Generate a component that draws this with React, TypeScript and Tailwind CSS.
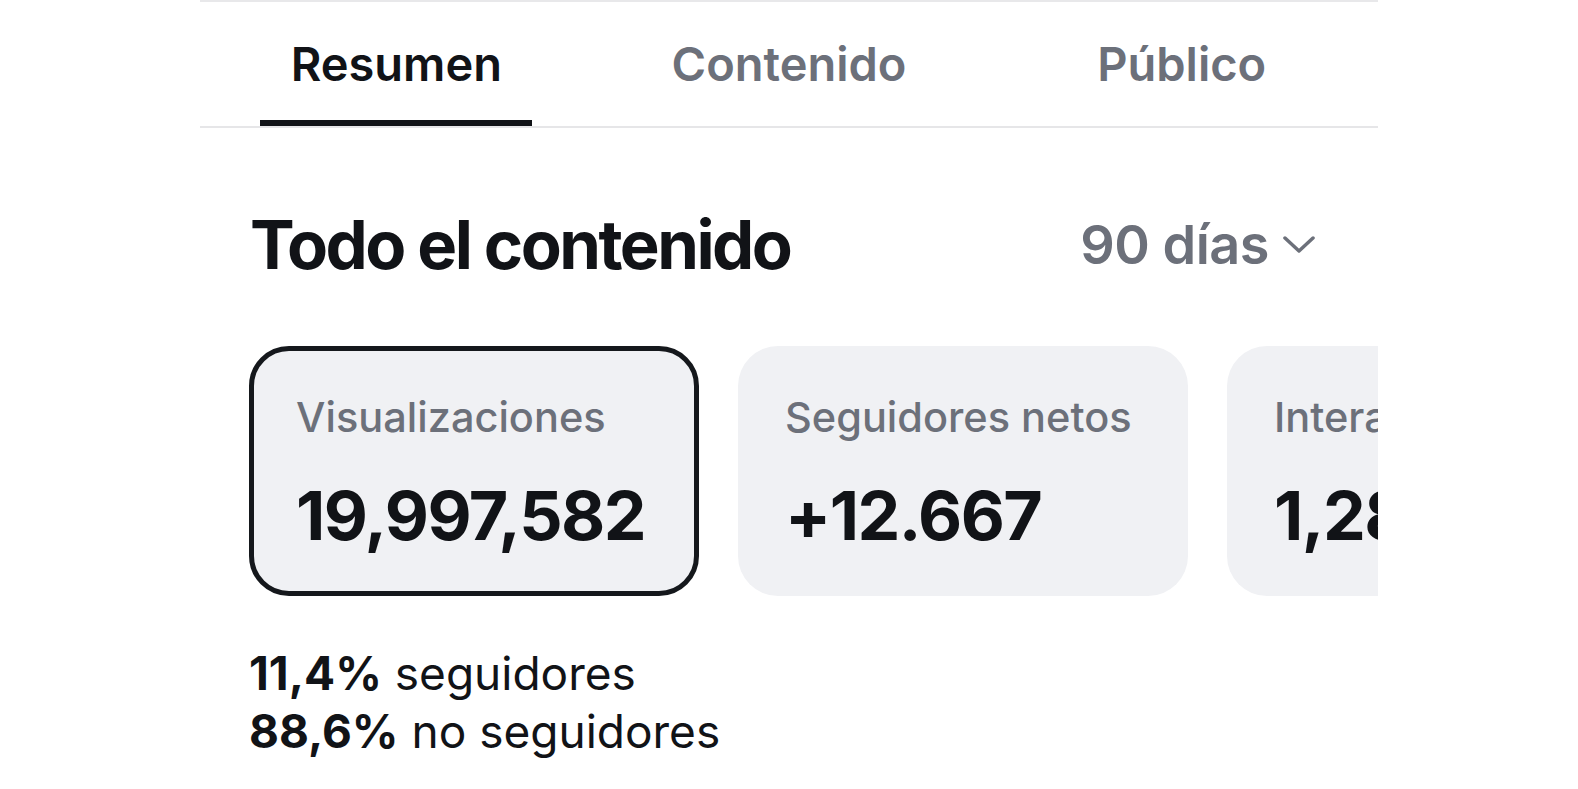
const tabs = [
  { label: 'Resumen', active: true },
  { label: 'Contenido', active: false },
  { label: 'Público', active: false },
];

const cards = [
  { label: 'Visualizaciones', value: '19,997,582', selected: true },
  { label: 'Seguidores netos', value: '+12.667', selected: false },
  { label: 'Interacciones', value: '1,280,431', selected: false },
];

const App = () => {
  return (
    <div className="min-h-screen bg-white font-['Inter','Noto_Sans',sans-serif] text-[#111317]">
      <div className="mx-auto w-[1178px] overflow-hidden border-t-2 border-[#e8e8ea]">
        <nav className="flex h-[126px] border-b-2 border-[#e6e6e8]">
          {tabs.map((tab) => (
            <div key={tab.label} className="flex flex-1 flex-col items-center">
              <span
                className={`mt-[34px] text-[47px] font-semibold leading-[56px] ${
                  tab.active ? 'text-[#111317]' : 'text-[#6c707a]'
                }`}
              >
                {tab.label}
              </span>
              {tab.active && <div className="mt-auto h-[6px] w-[272px] bg-[#111317]" />}
            </div>
          ))}
        </nav>

        <div className="flex items-center justify-between pl-[50px] pr-[63px] pt-[79px]">
          <h1 className="text-[67px] font-bold leading-[76px] tracking-[-2.5px]">Todo el contenido</h1>
          <button type="button" className="flex items-center gap-[14px] text-[#6c707a]">
            <span className="text-[54px] font-semibold leading-[76px] tracking-[-0.5px]">90 días</span>
            <svg width="32" height="18" viewBox="0 0 32 18" fill="none">
              <path d="M2 2 L16 15 L30 2" stroke="#6c707a" strokeWidth="3.5" strokeLinecap="round" strokeLinejoin="round" />
            </svg>
          </button>
        </div>

        <div className="mt-[63px] flex gap-[39px] pl-[49px]">
          {cards.map((card) => (
            <div
              key={card.label}
              className={`flex h-[250px] w-[450px] shrink-0 flex-col rounded-[40px] bg-[#f0f1f4] ${
                card.selected ? 'border-[5px] border-[#15181c] pl-[42px] pt-[41px]' : 'pl-[47px] pt-[46px]'
              }`}
            >
              <span className="text-[41.5px] font-medium leading-[50px] text-[#6c707a]">{card.label}</span>
              <span className="mt-[33px] text-[68px] font-bold leading-[80px] tracking-[-1.5px]">{card.value}</span>
            </div>
          ))}
        </div>

        <div className="mt-[48px] pl-[49px] text-[46px] leading-[58px]">
          <p>
            <span className="font-bold">11,4%</span> seguidores
          </p>
          <p>
            <span className="font-bold">88,6%</span> no seguidores
          </p>
        </div>
      </div>
    </div>
  );
};

export default App;
